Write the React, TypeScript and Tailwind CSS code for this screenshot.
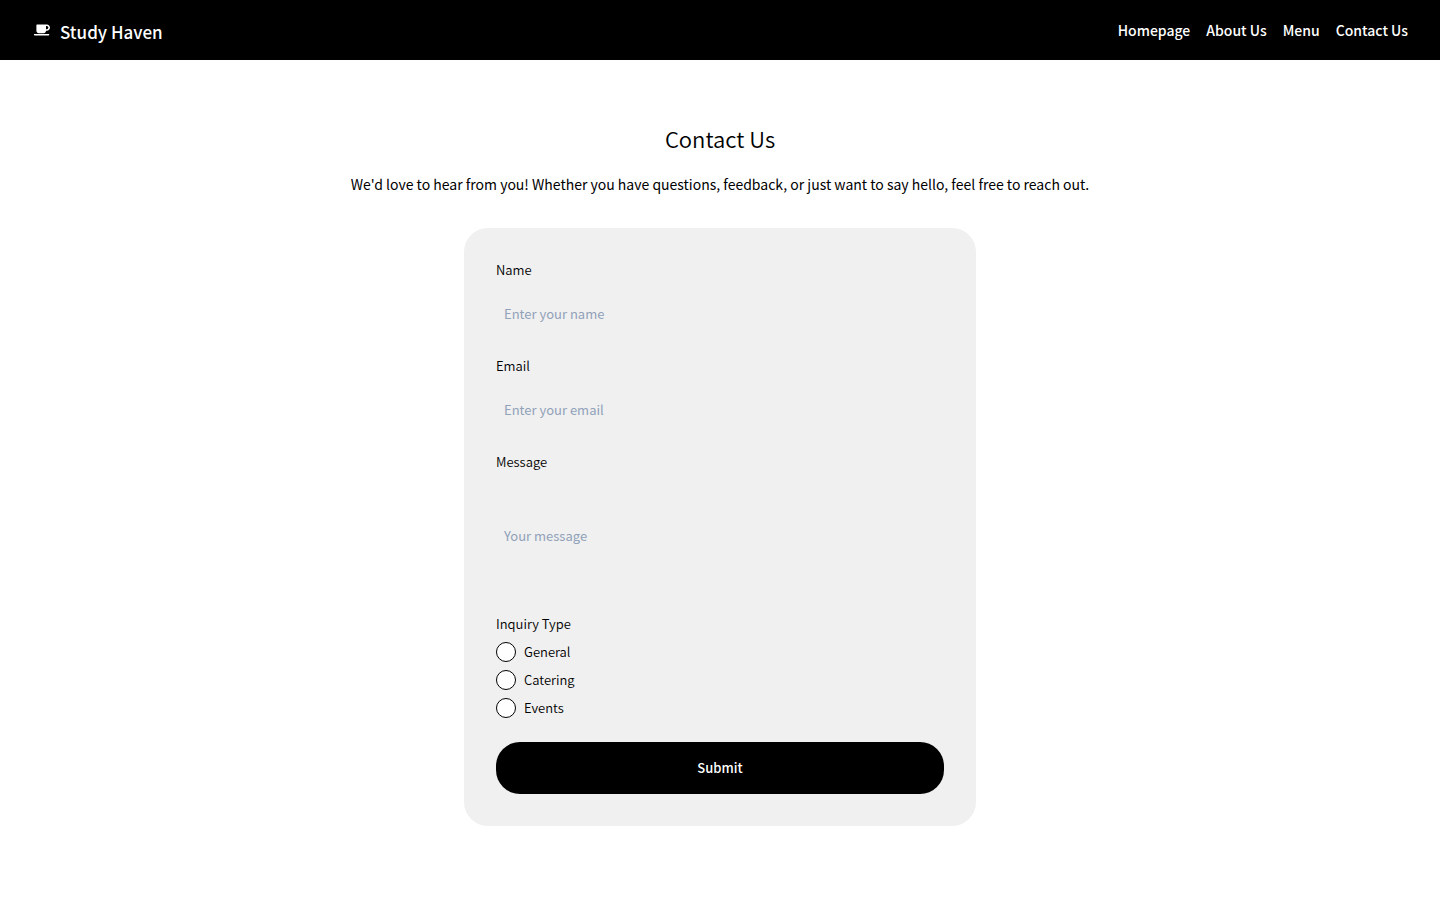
import { FaCoffee } from "react-icons/fa";

const links = ["Homepage", "About Us", "Menu", "Contact Us"];
const inquiryTypes = ["General", "Catering", "Events"];

const fieldClass =
  "mt-2 w-full bg-transparent px-2 text-[13px] leading-5 font-normal text-black placeholder:text-slate-400 outline-none focus-visible:ring-1 focus-visible:ring-black";

export default function App() {
  return (
    <div className="min-h-screen bg-white font-['Noto_Sans_CJK_SC','Noto_Sans',sans-serif] font-[350] text-black">
      <header className="flex h-15 items-center justify-between bg-black px-8 text-white">
        <a href="#home" className="flex items-center gap-2">
          <span className="flex w-5 justify-center">
            <FaCoffee className="size-4" aria-hidden="true" />
          </span>
          <span className="pt-1 text-[17px] leading-7 font-medium">Study Haven</span>
        </a>
        <nav className="flex gap-4 text-sm leading-6 font-medium">
          {links.map((link) => (
            <a key={link} href="#">
              {link}
            </a>
          ))}
        </nav>
      </header>

      <main className="flex flex-col items-center px-4 pt-15 pb-16">
        <h1 className="text-[22px] leading-9">Contact Us</h1>
        <p className="mt-4 text-center text-sm leading-6 font-normal">
          We'd love to hear from you! Whether you have questions, feedback, or just want to say hello, feel free to
          reach out.
        </p>

        <form className="mt-8 flex w-full max-w-lg flex-col rounded-3xl bg-[#f0f0f0] p-8 text-[13px] leading-5">
          <label htmlFor="name">Name</label>
          <input id="name" type="text" placeholder="Enter your name" className={`h-12.5 ${fieldClass}`} />

          <label htmlFor="email" className="mt-4.5">
            Email
          </label>
          <input id="email" type="email" placeholder="Enter your email" className={`h-12.5 ${fieldClass}`} />

          <label htmlFor="message" className="mt-4.5">
            Message
          </label>
          <textarea
            id="message"
            placeholder="Your message"
            className={`h-29 resize-none py-11.5 ${fieldClass}`}
          />

          <fieldset className="mt-4.5">
            <legend>Inquiry Type</legend>
            <div className="mt-2 flex flex-col gap-2">
              {inquiryTypes.map((type) => (
                <label key={type} className="flex items-center gap-2">
                  <input
                    type="radio"
                    name="inquiry"
                    value={type}
                    className="size-5 appearance-none rounded-full border border-black bg-white checked:border-4"
                  />
                  {type}
                </label>
              ))}
            </div>
          </fieldset>

          <button type="button" className="mt-6 h-13 rounded-3xl bg-black text-[13px] font-medium text-white">
            Submit
          </button>
        </form>
      </main>
    </div>
  );
}
